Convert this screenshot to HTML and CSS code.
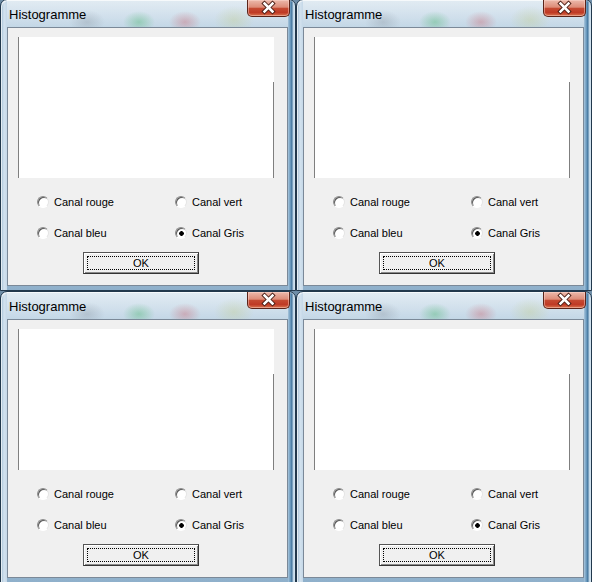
FILE: index.html
```html
<!DOCTYPE html>
<html lang="fr">
<head>
    <meta charset="UTF-8">
    <title>Histogramme</title>
    <link rel="stylesheet" href="styles.css">
</head>
<body>
    <div class="desktop">
        <div class="window">
            <div class="titlebar">
                <span class="title">Histogramme</span>
                <button class="close-button" title="Fermer">
                    <svg width="43" height="17" viewBox="0 0 43 17"><path d="M17.5 4.5 L25.5 12.5 M25.5 4.5 L17.5 12.5" stroke="#4a1d14" stroke-width="4.4" stroke-linecap="square"/><path d="M17.5 4.5 L25.5 12.5 M25.5 4.5 L17.5 12.5" stroke="#fff" stroke-width="2.5" stroke-linecap="square"/></svg>
                </button>
            </div>
            <div class="client">
                <div class="histogram"></div>
                <div class="options">
                    <label class="option"><input type="radio" name="canal1"> Canal rouge</label>
                    <label class="option"><input type="radio" name="canal1"> Canal vert</label>
                    <label class="option"><input type="radio" name="canal1"> Canal bleu</label>
                    <label class="option"><input type="radio" name="canal1" checked> Canal Gris</label>
                </div>
                <button class="ok-button"><span>OK</span></button>
            </div>
        </div>
        <div class="window">
            <div class="titlebar">
                <span class="title">Histogramme</span>
                <button class="close-button" title="Fermer">
                    <svg width="43" height="17" viewBox="0 0 43 17"><path d="M17.5 4.5 L25.5 12.5 M25.5 4.5 L17.5 12.5" stroke="#4a1d14" stroke-width="4.4" stroke-linecap="square"/><path d="M17.5 4.5 L25.5 12.5 M25.5 4.5 L17.5 12.5" stroke="#fff" stroke-width="2.5" stroke-linecap="square"/></svg>
                </button>
            </div>
            <div class="client">
                <div class="histogram"></div>
                <div class="options">
                    <label class="option"><input type="radio" name="canal2"> Canal rouge</label>
                    <label class="option"><input type="radio" name="canal2"> Canal vert</label>
                    <label class="option"><input type="radio" name="canal2"> Canal bleu</label>
                    <label class="option"><input type="radio" name="canal2" checked> Canal Gris</label>
                </div>
                <button class="ok-button"><span>OK</span></button>
            </div>
        </div>
        <div class="window">
            <div class="titlebar">
                <span class="title">Histogramme</span>
                <button class="close-button" title="Fermer">
                    <svg width="43" height="17" viewBox="0 0 43 17"><path d="M17.5 4.5 L25.5 12.5 M25.5 4.5 L17.5 12.5" stroke="#4a1d14" stroke-width="4.4" stroke-linecap="square"/><path d="M17.5 4.5 L25.5 12.5 M25.5 4.5 L17.5 12.5" stroke="#fff" stroke-width="2.5" stroke-linecap="square"/></svg>
                </button>
            </div>
            <div class="client">
                <div class="histogram"></div>
                <div class="options">
                    <label class="option"><input type="radio" name="canal3"> Canal rouge</label>
                    <label class="option"><input type="radio" name="canal3"> Canal vert</label>
                    <label class="option"><input type="radio" name="canal3"> Canal bleu</label>
                    <label class="option"><input type="radio" name="canal3" checked> Canal Gris</label>
                </div>
                <button class="ok-button"><span>OK</span></button>
            </div>
        </div>
        <div class="window">
            <div class="titlebar">
                <span class="title">Histogramme</span>
                <button class="close-button" title="Fermer">
                    <svg width="43" height="17" viewBox="0 0 43 17"><path d="M17.5 4.5 L25.5 12.5 M25.5 4.5 L17.5 12.5" stroke="#4a1d14" stroke-width="4.4" stroke-linecap="square"/><path d="M17.5 4.5 L25.5 12.5 M25.5 4.5 L17.5 12.5" stroke="#fff" stroke-width="2.5" stroke-linecap="square"/></svg>
                </button>
            </div>
            <div class="client">
                <div class="histogram"></div>
                <div class="options">
                    <label class="option"><input type="radio" name="canal4"> Canal rouge</label>
                    <label class="option"><input type="radio" name="canal4"> Canal vert</label>
                    <label class="option"><input type="radio" name="canal4"> Canal bleu</label>
                    <label class="option"><input type="radio" name="canal4" checked> Canal Gris</label>
                </div>
                <button class="ok-button"><span>OK</span></button>
            </div>
        </div>
    </div>
</body>
</html>
```

FILE: styles.css
```css
* {
    box-sizing: border-box;
}

body {
    margin: 0;
    padding: 0;
    background-color: #6f8ea8;
    font-family: 'Liberation Sans', Arial, sans-serif;
    overflow: hidden;
}

.desktop {
    display: grid;
    grid-template-columns: 296px 296px;
    grid-template-rows: 292px 292px;
    margin-top: -1px;
}

/* Aero glass frame */
.window {
    display: flex;
    flex-direction: column;
    border: 1px solid #22384c;
    border-radius: 7px 7px 0 0;
    padding: 0 7px 4px 6px;
    background:
        linear-gradient(to right, #9dbbd3 0, #d3e2ee 3px, #c5d8e8 6px, transparent 6px,
            transparent calc(100% - 7px), #a8c5dc calc(100% - 7px), #5c8fb6 calc(100% - 4px),
            #3f6f96 calc(100% - 3px), #b9d3e6 calc(100% - 2px), #d7e6f1 100%),
        linear-gradient(to bottom, #d2e1ec 0, #c2d6e6 30px, #a9c4da 80%, #8fb0cb 100%);
    box-shadow: inset 1px 1px 0 rgba(255, 255, 255, 0.7);
}

.titlebar {
    display: flex;
    justify-content: space-between;
    align-items: flex-start;
    height: 27px;
    background:
        radial-gradient(ellipse 18px 12px at 80px 22px, rgba(110, 120, 130, 0.25), transparent),
        radial-gradient(ellipse 16px 11px at 132px 22px, rgba(40, 170, 80, 0.32), transparent),
        radial-gradient(ellipse 16px 11px at 178px 22px, rgba(200, 50, 60, 0.28), transparent),
        radial-gradient(ellipse 20px 14px at 227px 20px, rgba(190, 200, 120, 0.3), transparent),
        linear-gradient(to bottom, rgba(255, 255, 255, 0.35), rgba(255, 255, 255, 0));
}

.title {
    padding: 7px 0 0 2px;
    font-size: 13px;
    line-height: 15px;
    color: #000;
}

.close-button {
    width: 43px;
    height: 17px;
    margin-right: -2px;
    padding: 0;
    border: 1px solid #5b2419;
    border-top: none;
    border-radius: 0 0 5px 5px;
    background: linear-gradient(to bottom, #ecb9ab 0%, #dd8c78 45%, #c54a32 52%, #bf3a25 78%, #d9744f 100%);
    box-shadow: inset 0 0 0 1px rgba(255, 220, 210, 0.45);
    cursor: pointer;
}

.close-button svg {
    display: block;
    margin: -1px 0 0 -1px;
}

.client {
    flex: 1;
    display: flex;
    flex-direction: column;
    align-items: flex-start;
    padding-top: 9px;
    background-color: #f0f0f0;
    border: 1px solid #7b8998;
}

.histogram {
    width: 256px;
    height: 141px;
    margin-left: 10px;
    border-left: 1px solid #7f7f7f;
    background:
        linear-gradient(#7f7f7f, #7f7f7f) right bottom / 1px calc(100% - 45px) no-repeat,
        #ffffff;
}

.options {
    display: grid;
    grid-template-columns: 138px auto;
    row-gap: 17px;
    margin-top: 17px;
    padding-left: 29px;
}

.option {
    display: flex;
    align-items: center;
    gap: 5px;
    height: 14px;
    font-size: 11px;
    color: #000;
}

.option input {
    appearance: none;
    width: 12px;
    height: 12px;
    margin: 0;
    border-radius: 50%;
    border: 1px solid;
    border-color: #8c8c8c #e4e4e4 #ffffff #8c8c8c;
    background-color: #ffffff;
    box-shadow: inset 1px 1px 0 #5a5a5a;
}

.option input:checked {
    background: radial-gradient(circle at 55% 55%, #000 0 2px, #fff 2.6px);
}

.ok-button {
    width: 116px;
    height: 22px;
    margin: 12px 0 0 75px;
    padding: 3px;
    border: 1px solid #555;
    border-right-color: #333;
    border-bottom-color: #333;
    background-color: #f0f0f0;
    box-shadow: inset 1px 1px 0 #ffffff, inset -1px -1px 0 #8a8a8a;
    font-family: 'Liberation Sans', Arial, sans-serif;
    font-size: 11px;
    color: #000;
    cursor: pointer;
}

.ok-button span {
    display: flex;
    align-items: center;
    justify-content: center;
    height: 100%;
    border: 1px dotted #000;
}
```
